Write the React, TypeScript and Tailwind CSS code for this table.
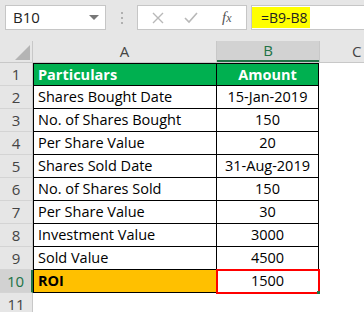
import React from "react";

const rows: [string, string][] = [
  ["Shares Bought Date", "15-Jan-2019"],
  ["No. of Shares Bought", "150"],
  ["Per Share Value", "20"],
  ["Shares Sold Date", "31-Aug-2019"],
  ["No. of Shares Sold", "150"],
  ["Per Share Value", "30"],
  ["Investment Value", "3000"],
  ["Sold Value", "4500"],
];

const font = { fontFamily: '"Open Sans", "Noto Sans", sans-serif' };

const RowHead = ({ n, active }: { n: number; active?: boolean }) => (
  <div
    className={`w-[33px] shrink-0 flex items-center justify-center text-[15px] border-b border-[#d4d4d4] ${
      active
        ? "bg-[#d2d2d2] text-[#217346] border-r-2 border-r-[#217346]"
        : "bg-[#e6e6e6] text-[#444] border-r border-r-[#c8c8c8]"
    }`}
  >
    {n}
  </div>
);

export default function App() {
  return (
    <div className="w-[364px] h-[312px] overflow-hidden bg-white text-black" style={font}>
      {/* formula bar */}
      <div className="h-[41px] bg-[#e6e6e6] flex items-start pt-[5px]">
        <div className="ml-[5px] w-[101px] h-[25px] bg-white border border-[#c6c6c6] flex items-center justify-between pl-[7px] pr-[6px] text-[15px] text-[#222]">
          <span>B10</span>
          <span className="w-0 h-0 border-l-[5px] border-r-[5px] border-t-[5px] border-l-transparent border-r-transparent border-t-[#777]" />
        </div>
        <div className="w-[31px] h-[25px] flex flex-col items-center justify-center gap-[3px]">
          <span className="w-[2px] h-[2px] bg-[#b0b0b0]" />
          <span className="w-[2px] h-[2px] bg-[#b0b0b0]" />
          <span className="w-[2px] h-[2px] bg-[#b0b0b0]" />
        </div>
        <div className="w-[110px] h-[25px] bg-white border border-[#c6c6c6] flex items-center">
          <svg width="12" height="12" viewBox="0 0 12 12" className="ml-[14px]">
            <path d="M1 1 L11 11 M11 1 L1 11" stroke="#b8b8b8" strokeWidth="1.4" />
          </svg>
          <svg width="14" height="12" viewBox="0 0 14 12" className="ml-[20px]">
            <path d="M1 6 L5 10 L13 1" stroke="#b8b8b8" strokeWidth="1.6" fill="none" />
          </svg>
          <span
            className="ml-[24px] text-[15px] italic text-[#555]"
            style={{ fontFamily: '"Liberation Serif", serif' }}
          >
            f<span className="text-[12px]">x</span>
          </span>
        </div>
        <div className="ml-[4px] flex-1 h-[25px] bg-white border-y border-l border-[#c6c6c6] flex items-center">
          <span className="bg-[#ffff00] h-[21px] w-[58px] flex items-center pl-[9px] text-[14px] text-[#222] whitespace-nowrap">
            =B9-B8
          </span>
        </div>
      </div>

      {/* column headers */}
      <div className="flex h-[22px] bg-[#e6e6e6] text-[15px] text-[#444] border-b border-[#c8c8c8]">
        <div className="w-[33px] shrink-0 flex items-end justify-end pr-[2px] pb-[2px] border-r border-[#c8c8c8]">
          <svg width="15" height="15" viewBox="0 0 15 15">
            <path d="M15 0 L15 15 L0 15 Z" fill="#b4b4b4" />
          </svg>
        </div>
        <div className="w-[184px] shrink-0 flex items-center justify-center border-r border-[#c8c8c8]">A</div>
        <div className="w-[102px] shrink-0 flex items-center justify-center bg-[#d2d2d2] text-[#217346] border-b-2 border-[#217346]">
          B
        </div>
        <div className="flex-1 flex items-center pl-[32px] border-l border-[#c8c8c8]">C</div>
      </div>

      {/* row 1 */}
      <div className="flex h-[23px]">
        <RowHead n={1} />
        <div className="w-[184px] shrink-0 bg-[#00b050] text-white font-bold text-[14.5px] flex items-center pl-[4px] border border-black">
          Particulars
        </div>
        <div className="w-[102px] shrink-0 bg-[#00b050] text-white font-bold text-[14.5px] flex items-center justify-center border-y border-r border-black">
          Amount
        </div>
      </div>

      {rows.map(([a, b], i) => (
        <div key={i} className="flex h-[23px]">
          <RowHead n={i + 2} />
          <div className="w-[184px] shrink-0 text-[14.5px] flex items-center pl-[4px] border-x border-b border-black whitespace-nowrap">
            {a}
          </div>
          <div className="w-[102px] shrink-0 text-[14.5px] flex items-center justify-center border-r border-b border-black">
            {b}
          </div>
        </div>
      ))}

      {/* row 10 */}
      <div className="flex h-[23px]">
        <RowHead n={10} active />
        <div className="w-[184px] shrink-0 bg-[#ffc000] font-bold text-[14.5px] flex items-center pl-[4px] border-x border-b border-black">
          ROI
        </div>
        <div className="w-[102px] shrink-0 relative text-[14.5px] flex items-center justify-center border-r border-b border-black">
          1500
          <span className="absolute -left-[1px] -top-[1px] w-[104px] h-[25px] border-2 border-[#ff0000]" />
          <span className="absolute -right-[2px] -bottom-[2px] w-[3px] h-[3px] bg-[#217346]" />
        </div>
      </div>

      {/* row 11 */}
      <div className="flex h-[23px]">
        <RowHead n={11} />
      </div>
    </div>
  );
}
